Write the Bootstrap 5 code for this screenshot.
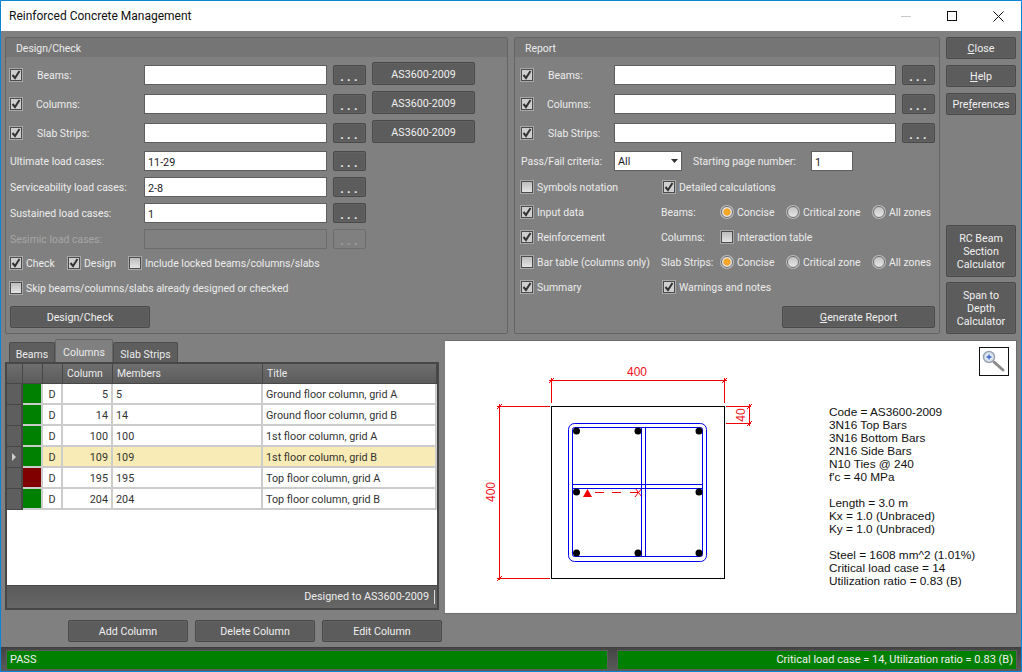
<!DOCTYPE html>
<html lang="en"><head><meta charset="utf-8"><title>Reinforced Concrete Management</title>
<link href="https://cdn.jsdelivr.net/npm/bootstrap@5.3.0/dist/css/bootstrap.min.css" rel="stylesheet">
<style>
html,body{margin:0;height:672px;overflow:hidden;background:#808080}
body{font-family:Roboto,"Noto Sans",sans-serif;font-size:10.450px;line-height:1.2;color:#ececec}
.win{width:1022px;height:672px;display:flex;flex-direction:column;border:1px solid #0c84d8;background:#808080;overflow:hidden}
.tbar{height:30px;background:#fff;color:#111;flex:none;display:flex;align-items:center;padding-left:8px;font-size:12px}
.tbar svg{display:block}
.wbtn{width:46px;height:30px;display:flex;align-items:center;justify-content:center}
.top{display:flex;height:304px;padding:6px 5px 0 4px;flex:none}
.pnl{border:1px solid #646464;background:#808080;flex:none;height:297px;border-radius:2px}
.pnl-h{height:19px;background:#757575;padding:2px 0 0 10px;line-height:17px;color:#ececec}
.pnl-b{padding:8px 4px 0 4px}
.p1{width:503px;margin-right:6px}.p2{width:426px;margin-right:6px}
.frow{display:flex;align-items:center;height:20px;white-space:nowrap}
.frow .lbl{padding-top:3px}
.mb9{margin-bottom:9px}.mb8{margin-bottom:8px}.mb6{margin-bottom:6px}.mb5{margin-bottom:5px}
.form-check-input{margin:0!important;flex:none;width:12px;height:12px;background-color:#d4d4d4;border:1px solid #4c4c4c;box-shadow:0 0 0 1px #a8a8a8;background-size:12px}
.form-check-input[type=checkbox]{border-radius:0;background-image:linear-gradient(#bdbdbd,#e4e4e4)}
.form-check-input:checked[type=checkbox]{background-color:#cfcfcf;border-color:#4c4c4c;background-size:10px;background-position:center;background-image:url("data:image/svg+xml,%3Csvg xmlns='http://www.w3.org/2000/svg' viewBox='0 0 10 10'%3E%3Cpath d='M1.5 5 4 8 8.5 1' fill='none' stroke='%23333' stroke-width='2'/%3E%3C/svg%3E")}
.form-check-input[type=radio]{background-image:linear-gradient(#c4c4c4,#e6e6e6);border-color:#6a6a6a;box-shadow:0 0 0 1px #bdbdbd}
.form-check-input:checked[type=radio]{background-color:#ddd;border-color:#6a6a6a;background-size:auto;background-image:radial-gradient(circle,#f6b02c 0,#f0a020 3.200px,#e8e8e8 4px)}
.lbl{flex:none}
.dis{color:#a6a6a6}
.form-control,.form-select{border:1px solid #5e5e5e;border-radius:0;min-height:0;height:20px;padding:2px 3px 0;font-size:10.800px;line-height:16px;color:#222;background-color:#fff;box-shadow:none;font-family:inherit}
.form-control:disabled{background:#808080;border-color:#6c6c6c}
.form-select{padding:2px 3px 0;background-position:right 0 center;background-size:12px 12px;width:68px;flex:none;background-image:url("data:image/svg+xml,%3Csvg xmlns='http://www.w3.org/2000/svg' viewBox='0 0 12 12'%3E%3Cpath d='M2 4h7L5.500 8z' fill='%23333'/%3E%3C/svg%3E")}
.ti{width:183px;flex:none}
.btn{--bs-btn-border-radius:2px;background:#5c5c5c;border:1px solid #494949;color:#f0f0f0;font-size:10.700px;line-height:13px;padding:0;flex:none;box-shadow:inset 0 0 0 1px #626262;font-family:inherit}
.btn-dots{width:33px;height:20px;margin-left:6px;font-size:12px;letter-spacing:3.400px;padding:4px 0 0 2px;font-weight:700;line-height:14px}
.btn-dots:disabled{background:#808080;border-color:#6e6e6e;color:#a0a0a0;box-shadow:none;opacity:1}
.btn-as{width:103px;height:23px;margin-left:6px;margin-top:-3px;padding-top:2px}
.btn-w{height:22px;padding-top:1px}
.side{width:70px;flex:none;display:flex;flex-direction:column;height:297px}
.side .btn-w{width:70px}
.side .calc{height:52px;width:70px}
.u{text-decoration:underline}
.mid{display:flex;flex:none;height:304px;padding:0 5px 0 4px;margin-top:4px}
.lft{width:434px;flex:none;margin-right:5px;position:relative}
.nav-tabs{height:22px;border:0;padding-left:4px;align-items:flex-end;flex-wrap:nowrap;margin-top:1px}
.nav-tabs .nav-link{background:#5e5e5e;border:1px solid #4c4c4c;border-bottom:0;border-radius:2px 2px 0 0;color:#ececec;padding:4px 0 0;margin:0;height:20px;line-height:15px;font-size:10.550px;text-align:center}
.nav-tabs .nav-link.active{background:#808080;color:#ececec;height:23px;border-color:#666;padding-top:5px}
.grid{height:248px;width:434px;border:2px solid #474747;background:#fff;display:flex;flex-direction:column}
.gw{flex:1;min-height:0}
.table{width:430px;margin:0;table-layout:fixed;--bs-table-bg:transparent;border-collapse:separate;border-spacing:0;font-size:10.800px;color:#333}
.table th{height:20px;padding:2px 0 0 4px;vertical-align:middle;font-size:10.400px;background:linear-gradient(#6e6e6e,#5c5c5c);border:solid #474747;border-width:0 1px 1px 0;font-weight:400;color:#ececec}
.table td{height:21px;padding:3px 3px 0;border:solid #ccc;border-width:0 2px 2px 0;vertical-align:middle;color:#333;background:#fff}
.table td.rh{background:#5e5e5e;border-color:#474747;border-width:0 2px 1px 0;padding:0}
.table td.g{background:#008000;padding:0}.table td.r{background:#800000;padding:0}
.table td.n{text-align:right}
.table td.d{text-align:center}
.table tr.sel td:not(.rh):not(.g){background:#f9ebb5}
.gf{height:23px;background:linear-gradient(#5a5a5a,#666);border-top:1px solid #474747;display:flex;align-items:center;justify-content:flex-end;padding-right:2px;color:#ececec;flex:none;font-size:10.800px}
.gf i{display:block;width:1px;height:14px;background:#ddd;margin-left:5px}
.acts{display:flex;justify-content:flex-start;padding-left:63px;margin-top:10px;position:relative;width:440px;gap:7px}
.acts .btn{width:120px;height:22px;padding-top:1px}
.pic{width:573px;height:274px;background:#fff;border:1px solid #6c6c6c;border-left-color:#808080;flex:none;margin-top:1px;position:relative}
.pic svg{display:block}
.pic text{font-family:"Liberation Sans",sans-serif;font-size:11.800px;fill:#111}
.pic text.dim{fill:#f01020;font-size:12px}
.zoomb{position:absolute;right:7px;top:6px;width:30px;height:29px;background:#fff;border:1px solid #111;padding:0;border-radius:0}
.stat{height:24px;margin-top:auto;flex:none;display:flex;background:linear-gradient(#444,#5a5a5a);padding:2px 4px 1px 5px;gap:9px;border-top:1px solid #3e3e3e;box-sizing:border-box}
.stat div{background:#008000;border:1px solid #5c5c5c;color:#f0f0f0;display:flex;align-items:center;padding:0 3px;font-size:11px}
.s1{width:602px;flex:none}.s2{flex:1;justify-content:flex-end}
</style></head><body>
<div class="win">
 <div class="tbar"><span class="flex-grow-1">Reinforced Concrete Management</span>
  <div class="d-flex">
   <div class="wbtn"><svg width="10" height="10"><path d="M0 5.5h10" stroke="#c8c8c8"/></svg></div>
   <div class="wbtn"><svg width="10" height="10"><rect x=".5" y=".5" width="9" height="9" fill="none" stroke="#111"/></svg></div>
   <div class="wbtn"><svg width="11" height="11"><path d="M.5.5l10 10M10.500.5l-10 10" stroke="#111"/></svg></div>
  </div>
 </div>
 <div class="top">
  <div class="pnl p1"><div class="pnl-h">Design/Check</div><div class="pnl-b">
   <div class="frow mb9"><input class="form-check-input" type="checkbox" checked><span class="lbl" style="width:122px;padding-left:15px">Beams:</span><input class="form-control ti"><button class="btn btn-dots">...</button><button class="btn btn-as">AS3600-2009</button></div>
   <div class="frow mb9"><input class="form-check-input" type="checkbox" checked><span class="lbl" style="width:122px;padding-left:14px">Columns:</span><input class="form-control ti"><button class="btn btn-dots">...</button><button class="btn btn-as">AS3600-2009</button></div>
   <div class="frow mb8"><input class="form-check-input" type="checkbox" checked><span class="lbl" style="width:122px;padding-left:15px">Slab Strips:</span><input class="form-control ti"><button class="btn btn-dots">...</button><button class="btn btn-as">AS3600-2009</button></div>
   <div class="frow mb6"><span class="lbl" style="width:134px">Ultimate load cases:</span><input class="form-control ti" value="11-29"><button class="btn btn-dots">...</button></div>
   <div class="frow mb6"><span class="lbl" style="width:134px">Serviceability load cases:</span><input class="form-control ti" value="2-8"><button class="btn btn-dots">...</button></div>
   <div class="frow mb6"><span class="lbl" style="width:134px">Sustained load cases:</span><input class="form-control ti" value="1"><button class="btn btn-dots">...</button></div>
   <div class="frow" style="margin-bottom:4px"><span class="lbl dis" style="width:134px">Sesimic load cases:</span><input class="form-control ti" disabled><button class="btn btn-dots" disabled>...</button></div>
   <div class="frow mb5"><input class="form-check-input" type="checkbox" checked><span class="lbl ms-1" style="width:42px">Check</span><input class="form-check-input" type="checkbox" checked><span class="lbl ms-1" style="width:45px">Design</span><input class="form-check-input" type="checkbox"><span class="lbl ms-1">Include locked beams/columns/slabs</span></div>
   <div class="frow" style="margin-bottom:8px"><input class="form-check-input" type="checkbox"><span class="lbl ms-1">Skip beams/columns/slabs already designed or checked</span></div>
   <button class="btn btn-w" style="width:140px">Design/Check</button>
  </div></div>
  <div class="pnl p2"><div class="pnl-h">Report</div><div class="pnl-b" style="padding-left:6px">
   <div class="frow mb9"><input class="form-check-input" type="checkbox" checked><span class="lbl" style="width:81px;padding-left:15px">Beams:</span><input class="form-control" style="width:282px;flex:none"><button class="btn btn-dots">...</button></div>
   <div class="frow mb9"><input class="form-check-input" type="checkbox" checked><span class="lbl" style="width:81px;padding-left:14px">Columns:</span><input class="form-control" style="width:282px;flex:none"><button class="btn btn-dots">...</button></div>
   <div class="frow mb8"><input class="form-check-input" type="checkbox" checked><span class="lbl" style="width:81px;padding-left:15px">Slab Strips:</span><input class="form-control" style="width:282px;flex:none"><button class="btn btn-dots">...</button></div>
   <div class="frow mb6"><span class="lbl" style="width:93px">Pass/Fail criteria:</span><select class="form-select"><option>All</option></select><span class="lbl" style="width:129px;padding-left:11px">Starting page number:</span><input class="form-control" style="width:42px;flex:none" value="1"></div>
   <div class="frow mb5"><input class="form-check-input" type="checkbox"><span class="lbl ms-1" style="width:126px">Symbols notation</span><input class="form-check-input" type="checkbox" checked><span class="lbl ms-1">Detailed calculations</span></div>
   <div class="frow mb5"><input class="form-check-input" type="checkbox" checked><span class="lbl ms-1" style="width:124px">Input data</span><span class="lbl" style="width:60px">Beams:</span><input class="form-check-input" type="radio" name="a" checked><span class="lbl ms-1" style="width:50px">Concise</span><input class="form-check-input" type="radio" name="a"><span class="lbl ms-1" style="width:70px">Critical zone</span><input class="form-check-input" type="radio" name="a"><span class="lbl ms-1">All zones</span></div>
   <div class="frow mb5"><input class="form-check-input" type="checkbox" checked><span class="lbl ms-1" style="width:124px">Reinforcement</span><span class="lbl" style="width:60px">Columns:</span><input class="form-check-input" type="checkbox"><span class="lbl ms-1">Interaction table</span></div>
   <div class="frow mb5"><input class="form-check-input" type="checkbox"><span class="lbl ms-1" style="width:124px">Bar table (columns only)</span><span class="lbl" style="width:60px">Slab Strips:</span><input class="form-check-input" type="radio" name="b" checked><span class="lbl ms-1" style="width:50px">Concise</span><input class="form-check-input" type="radio" name="b"><span class="lbl ms-1" style="width:70px">Critical zone</span><input class="form-check-input" type="radio" name="b"><span class="lbl ms-1">All zones</span></div>
   <div class="frow" style="margin-bottom:9px"><input class="form-check-input" type="checkbox" checked><span class="lbl ms-1" style="width:126px">Summary</span><input class="form-check-input" type="checkbox" checked><span class="lbl ms-1">Warnings and notes</span></div>
   <div class="d-flex justify-content-end"><button class="btn btn-w" style="width:153px"><span class="u">G</span>enerate Report</button></div>
  </div></div>
  <div class="side">
   <button class="btn btn-w mb6"><span class="u">C</span>lose</button>
   <button class="btn btn-w mb6"><span class="u">H</span>elp</button>
   <button class="btn btn-w">Pre<span class="u">f</span>erences</button>
   <button class="btn calc" style="margin-top:auto;margin-bottom:5px">RC Beam<br>Section<br>Calculator</button>
   <button class="btn calc">Span to<br>Depth<br>Calculator</button>
  </div>
 </div>
 <div class="mid">
  <div class="lft">
   <ul class="nav nav-tabs">
    <li class="nav-item"><a class="nav-link" style="width:46px">Beams</a></li>
    <li class="nav-item"><a class="nav-link active" style="width:58px">Columns</a></li>
    <li class="nav-item"><a class="nav-link" style="width:65px">Slab Strips</a></li>
   </ul>
   <div class="grid">
    <div class="gw">
    <table class="table"><colgroup><col style="width:16px"><col style="width:20px"><col style="width:20px"><col style="width:50px"><col style="width:150px"><col></colgroup>
     <thead><tr><th></th><th></th><th></th><th>Column</th><th>Members</th><th>Title</th></tr></thead>
     <tbody>
      <tr><td class="rh"></td><td class="g"></td><td class="d">D</td><td class="n">5</td><td>5</td><td>Ground floor column, grid A</td></tr>
      <tr><td class="rh"></td><td class="g"></td><td class="d">D</td><td class="n">14</td><td>14</td><td>Ground floor column, grid B</td></tr>
      <tr><td class="rh"></td><td class="g"></td><td class="d">D</td><td class="n">100</td><td>100</td><td>1st floor column, grid A</td></tr>
      <tr class="sel"><td class="rh"><svg class="d-block mx-auto" width="4" height="8"><path d="M0 0l4 4-4 4z" fill="#ccc"/></svg></td><td class="g"></td><td class="d">D</td><td class="n">109</td><td>109</td><td>1st floor column, grid B</td></tr>
      <tr><td class="rh"></td><td class="r"></td><td class="d">D</td><td class="n">195</td><td>195</td><td>Top floor column, grid A</td></tr>
      <tr><td class="rh"></td><td class="g"></td><td class="d">D</td><td class="n">204</td><td>204</td><td>Top floor column, grid B</td></tr>
     </tbody>
    </table></div>
    <div class="gf">Designed to AS3600-2009<i></i></div>
   </div>
   <div class="acts"><button class="btn">Add Column</button><button class="btn">Delete Column</button><button class="btn">Edit Column</button></div>
  </div>
  <div class="pic">
   <svg width="571" height="272" viewBox="445 341 571 272">
    <g fill="none" stroke="#f00000" stroke-width="1">
     <path d="M551.500 378v25M724.500 378v25M549 380.500h178M549 383l5-5M722 383l5-5"/>
     <path d="M499.500 404v176M497 406.500h53M497 578.500h53M497 409l5-5M497 581l5-5"/>
     <path d="M726 406.500h25M726 423.500h25M749.500 404v22M747 409l5-5M747 426l5-5"/>
     <path d="M595 492.500h9M612 492.500h9M630 492.500h9M635 488l7 9M635 497l7-9"/>
    </g>
    <path d="M583 497l4.500-8 4.500 8z" fill="#f00000"/>
    <rect x="551.500" y="406.500" width="173" height="172" fill="none" stroke="#000"/>
    <g fill="none" stroke="#0000f0">
     <rect x="568.500" y="423.500" width="138" height="138" rx="6"/>
     <rect x="572.500" y="427.500" width="130" height="129" rx="2"/>
     <path d="M641.500 428v128M645.500 428v128M573 484.500h129M573 488.500h129"/>
    </g>
    <g fill="#000"><circle cx="576.500" cy="431" r="3.500"/><circle cx="638" cy="431" r="3.500"/><circle cx="699" cy="431" r="3.500"/><circle cx="576.500" cy="492" r="3.500"/><circle cx="699" cy="492" r="3.500"/><circle cx="576.500" cy="553" r="3.500"/><circle cx="638" cy="553" r="3.500"/><circle cx="699" cy="553" r="3.500"/></g>
    <text class="dim" x="637" y="376" text-anchor="middle">400</text>
    <text class="dim" transform="translate(495 492) rotate(-90)" text-anchor="middle">400</text>
    <text class="dim" transform="translate(745 415) rotate(-90)" text-anchor="middle">40</text>
    <text x="829" y="416">Code = AS3600-2009</text>
    <text x="829" y="429">3N16 Top Bars</text>
    <text x="829" y="442">3N16 Bottom Bars</text>
    <text x="829" y="455">2N16 Side Bars</text>
    <text x="829" y="468">N10 Ties @ 240</text>
    <text x="829" y="481">f'c = 40 MPa</text>
    <text x="829" y="507">Length = 3.0 m</text>
    <text x="829" y="520">Kx = 1.0 (Unbraced)</text>
    <text x="829" y="533">Ky = 1.0 (Unbraced)</text>
    <text x="829" y="559">Steel = 1608 mm^2 (1.01%)</text>
    <text x="829" y="572">Critical load case = 14</text>
    <text x="829" y="585">Utilization ratio = 0.83 (B)</text>
   </svg>
   <button class="zoomb" aria-label="Zoom"><svg class="d-block" width="28" height="27" viewBox="0 0 28 27"><path d="M14 14l9 8" stroke="#8a8a8a" stroke-width="3" stroke-linecap="round"/><circle cx="9" cy="9" r="5.500" fill="#dbe7f5" stroke="#9aa4b0" stroke-width="1.500"/><path d="M6.500 9h5M9 6.500v5" stroke="#3d62c8" stroke-width="1.300"/></svg></button>
  </div>
 </div>
 <div class="stat"><div class="s1">PASS</div><div class="s2">Critical load case = 14, Utilization ratio = 0.83 (B)</div></div>
</div>
<script src="https://cdn.jsdelivr.net/npm/bootstrap@5.3.0/dist/js/bootstrap.bundle.min.js"></script>
</body></html>
